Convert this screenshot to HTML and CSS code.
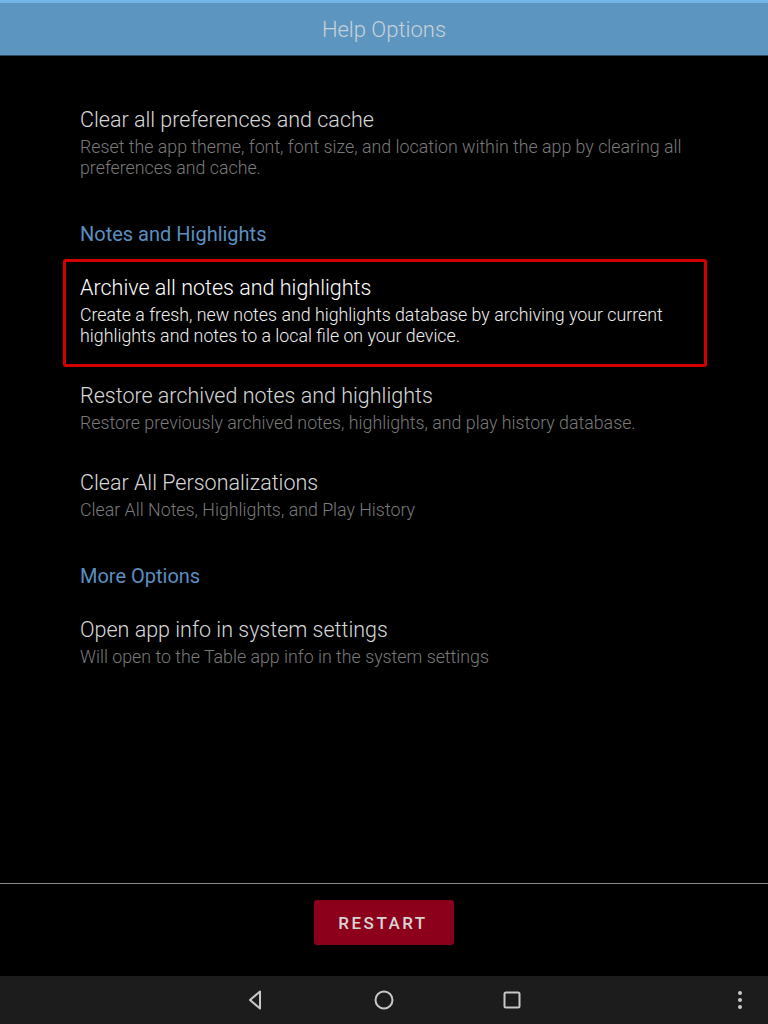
FILE: index.html
```html
<!DOCTYPE html>
<html lang="en">
<head>
    <meta charset="utf-8">
    <title>Help Options</title>
    <link rel="stylesheet" href="styles.css">
</head>
<body>
    <div class="screen">
        <div class="header">
            <h1>Help Options</h1>
        </div>

        <div class="content">
            <div class="item">
                <div class="item-title">Clear all preferences and cache</div>
                <div class="item-desc">Reset the app theme, font, font size, and location within the app by clearing all preferences and cache.</div>
            </div>

            <div class="section">Notes and Highlights</div>

            <div class="item selected">
                <div class="item-title">Archive all notes and highlights</div>
                <div class="item-desc">Create a fresh, new notes and highlights database by archiving your current highlights and notes to a local file on your device.</div>
            </div>
            <div class="item">
                <div class="item-title">Restore archived notes and highlights</div>
                <div class="item-desc">Restore previously archived notes, highlights, and play history database.</div>
            </div>
            <div class="item">
                <div class="item-title">Clear All Personalizations</div>
                <div class="item-desc">Clear All Notes, Highlights, and Play History</div>
            </div>

            <div class="section">More Options</div>

            <div class="item">
                <div class="item-title">Open app info in system settings</div>
                <div class="item-desc">Will open to the Table app info in the system settings</div>
            </div>
        </div>

        <div class="footer">
            <button class="restart">RESTART</button>
        </div>

        <!-- Android navigation bar -->
        <div class="navbar">
            <div class="nav-keys">
                <svg class="nav-icon" width="24" height="24" viewBox="0 0 24 24">
                    <path d="M16 3.5 L6 12 L16 20.5 Z" fill="none" stroke="#c8c8c8" stroke-width="2" stroke-linejoin="round"/>
                </svg>
                <svg class="nav-icon" width="24" height="24" viewBox="0 0 24 24">
                    <circle cx="12" cy="12" r="8.5" fill="none" stroke="#c8c8c8" stroke-width="2"/>
                </svg>
                <svg class="nav-icon" width="24" height="24" viewBox="0 0 24 24">
                    <rect x="4.5" y="4.5" width="15" height="15" rx="1.5" fill="none" stroke="#c8c8c8" stroke-width="2"/>
                </svg>
            </div>
            <svg class="nav-menu" width="8" height="24" viewBox="0 0 8 24">
                <circle cx="4" cy="5" r="2" fill="#c8c8c8"/>
                <circle cx="4" cy="12" r="2" fill="#c8c8c8"/>
                <circle cx="4" cy="19" r="2" fill="#c8c8c8"/>
            </svg>
        </div>
    </div>
</body>
</html>
```

FILE: styles.css
```css
body {
    margin: 0;
    padding: 0;
    background: #000000;
    font-family: Roboto, "Noto Sans", sans-serif;
}
.screen {
    width: 768px;
    height: 1024px;
    display: flex;
    flex-direction: column;
    overflow: hidden;
}
.header {
    background: #5c95bf;
    border-top: 3px solid #72b5e8;
    border-bottom: 1px solid #2f4a5f;
    height: 52px;
    display: flex;
    align-items: center;
    justify-content: center;
}
.header h1 {
    margin: 0;
    font-size: 22px;
    font-weight: 300;
    color: #c9d1d8;
}
.content {
    flex: 1;
    padding: 35px 61px 0 63px;
}
.item {
    border: 3px solid transparent;
    border-radius: 3px;
    padding: 14px 14px 18px 14px;
}
.item.selected {
    border-color: #d40000;
}
.item-title {
    font-size: 21.5px;
    font-weight: 300;
    line-height: 24px;
    color: #d8d8d8;
}
.item-desc {
    margin-top: 4px;
    font-size: 17.8px;
    font-weight: 300;
    line-height: 21px;
    color: #7a7a7a;
}
.item.selected .item-title {
    color: #ffffff;
}
.item.selected .item-desc {
    color: #f0f0f0;
}
.section {
    padding: 23px 0 13px 17px;
    font-size: 20px;
    line-height: 24px;
    color: #5b8fc0;
}
.footer {
    border-top: 1px solid #8a8a8a;
    height: 93px;
    display: flex;
    justify-content: center;
    align-items: flex-start;
    padding-top: 16px;
    box-sizing: border-box;
}
.restart {
    width: 140px;
    height: 45px;
    background: #8c001c;
    color: #d6d6d6;
    border: none;
    border-radius: 3px;
    font-family: Roboto, "Noto Sans", sans-serif;
    font-size: 17px;
    font-weight: 500;
    letter-spacing: 2.5px;
    padding-left: 4px;
    cursor: pointer;
}
.navbar {
    height: 48px;
    background: #1c1c1c;
    display: flex;
    align-items: center;
    position: relative;
}
.nav-keys {
    flex: 1;
    display: flex;
    justify-content: center;
    gap: 104px;
}
.nav-menu {
    position: absolute;
    right: 24px;
    top: 12px;
}
```
